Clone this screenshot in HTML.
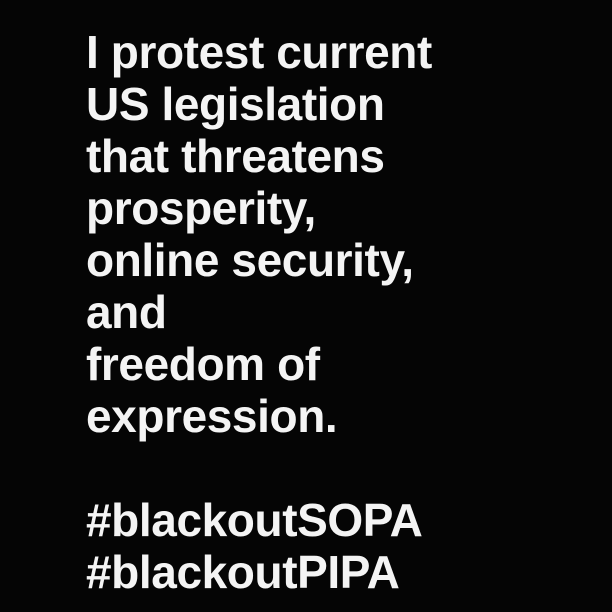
<!DOCTYPE html>
<html><head><style>
html,body{margin:0;padding:0;background:#050505;width:612px;height:612px;overflow:hidden}
.t{position:absolute;left:86px;top:26px;font-family:"Liberation Sans",Arial,sans-serif;font-weight:bold;font-size:46px;line-height:52px;color:#f4f4f4;letter-spacing:-0.4px;white-space:pre}
</style></head><body>
<div class="t">I protest current
US legislation
that threatens
prosperity,
online security,
and
freedom of
expression.

#blackoutSOPA
#blackoutPIPA</div>
</body></html>
